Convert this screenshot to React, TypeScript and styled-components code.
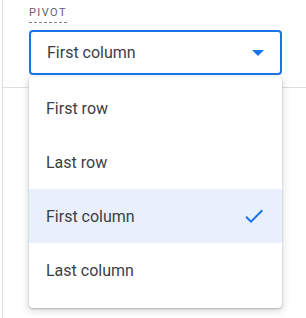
import styled, { createGlobalStyle } from "styled-components";

const GlobalStyle = createGlobalStyle`
    body {
        margin: 0;
        background: #fff;
        font-family: Roboto, "Liberation Sans", Arial, sans-serif;
    }
`;

const Panel = styled.div`
    margin-left: 2px;
    height: 318px;
    border-left: 1px solid #dadce0;
    box-sizing: border-box;
`;

const Section = styled.div`
    padding: 1px 24px 12px 26px;
    border-bottom: 1px solid #e0e0e0;
`;

const Label = styled.span`
    display: inline-block;
    font-size: 11px;
    line-height: 14px;
    letter-spacing: 1.4px;
    text-transform: uppercase;
    color: #5f6368;
    padding-bottom: 2px;
    border-bottom: 1px dashed #80868b;
`;

const Field = styled.div`
    position: relative;
    margin-top: 7px;
`;

const SelectBox = styled.div`
    height: 45px;
    box-sizing: border-box;
    border: 2px solid #1a73e8;
    border-radius: 4px;
    display: flex;
    align-items: center;
    justify-content: space-between;
    padding: 0 16px 0 16px;
    font-size: 16px;
    color: #3c4043;
`;

const Arrow = styled.svg`
    width: 12px;
    height: 6px;
    fill: #1a73e8;
    margin-top: 1px;
`;

const Menu = styled.ul`
    position: absolute;
    top: 47px;
    left: 0;
    right: 0;
    margin: 0;
    padding: 4px 0 11px;
    list-style: none;
    background: #fff;
    border-radius: 4px;
    box-shadow: 0 1px 2px 0 rgba(60, 64, 67, 0.3), 0 2px 6px 2px rgba(60, 64, 67, 0.15);
`;

const Item = styled.li<{ selected?: boolean }>`
    height: 54px;
    display: flex;
    align-items: center;
    justify-content: space-between;
    padding: 0 16px 0 17px;
    font-size: 16px;
    color: #3c4043;
    background: ${(props) => (props.selected ? "#e8f0fe" : "transparent")};
`;

const Check = styled.svg`
    width: 24px;
    height: 24px;
    fill: #1a73e8;
`;

const options = ["First row", "Last row", "First column", "Last column"];

function App() {
    const value = "First column";
    return (
        <>
            <GlobalStyle />
            <Panel>
                <Section>
                    <Label>Pivot</Label>
                    <Field>
                        <SelectBox>
                            <span>{value}</span>
                            <Arrow viewBox="0 0 12 6">
                                <path d="M0 0h12L6 6z" />
                            </Arrow>
                        </SelectBox>
                        <Menu>
                            {options.map((opt) => (
                                <Item key={opt} selected={opt === value}>
                                    <span>{opt}</span>
                                    {opt === value && (
                                        <Check viewBox="0 0 24 24">
                                            <path d="M9 16.17L4.83 12l-1.42 1.41L9 19 21 7l-1.41-1.41z" />
                                        </Check>
                                    )}
                                </Item>
                            ))}
                        </Menu>
                    </Field>
                </Section>
            </Panel>
        </>
    );
}

export default App;
